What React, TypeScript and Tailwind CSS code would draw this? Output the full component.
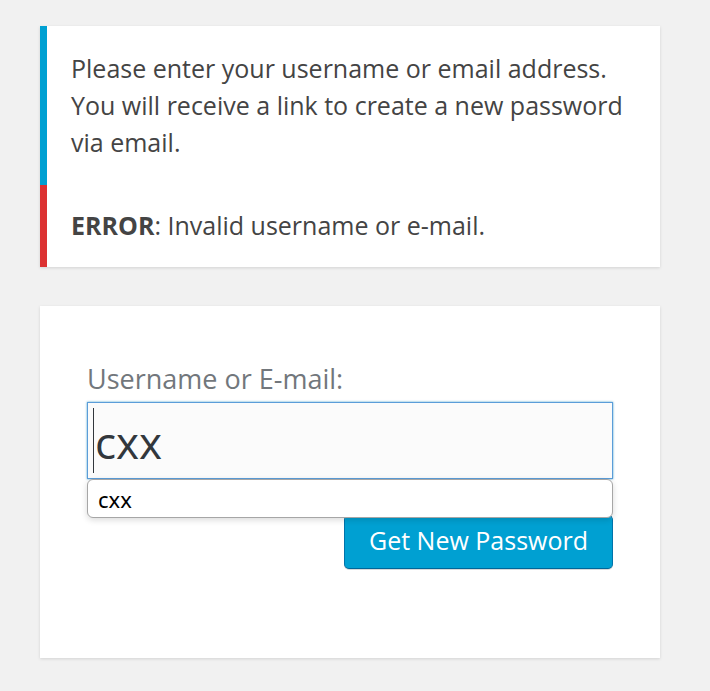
export default function App() {
  return (
    <div
      className="min-h-[691px] bg-[#f1f1f1] pt-[26px] pl-10"
      style={{ fontFamily: '"Open Sans", "Noto Sans", sans-serif' }}
    >
      <div className="w-[620px] bg-white shadow-[0_1px_3px_rgba(0,0,0,0.13)] text-[25px] leading-[37px] text-[#444]">
        <div className="border-l-[7px] border-[#00a0d2] pl-[24px] pr-[20px] py-[24px]">
          <p>
            Please enter your username or email address. You will receive a link to create a new
            password via email.
          </p>
        </div>
        <div className="border-l-[7px] border-[#dc3232] pl-[24px] pr-[20px] pt-[22px] pb-[23px]">
          <p>
            <strong className="font-bold">ERROR</strong>: Invalid username or e-mail.
          </p>
        </div>
      </div>

      <form className="mt-[39px] w-[620px] bg-white shadow-[0_1px_3px_rgba(0,0,0,0.13)] pl-[47px] pr-[47px] pt-[54px] pb-[89px]">
        <label className="block text-[27px] leading-[37px] text-[#72777c]">Username or E-mail:</label>
        <div className="relative mt-[5px]">
          <div className="flex h-[77px] items-center border border-[#5b9dd9] bg-[#fbfbfb] pl-[5px] shadow-[0_0_2px_rgba(30,140,190,0.8)]">
            <span className="mr-px h-[65px] w-px bg-[#32373c]" />
            <span className="text-[44px] leading-[60px] text-[#32373c] mt-[2px]">cxx</span>
          </div>
          <div
            className="absolute left-0 right-0 top-[77px] z-10 flex h-[39px] items-center rounded-[6px] border border-[#a6a6a6] bg-white pl-[10px] shadow-[0_2px_6px_rgba(0,0,0,0.15)]"
            style={{ fontFamily: '"Noto Sans", sans-serif' }}
          >
            <span className="text-[22px] leading-none text-black">cxx</span>
          </div>
        </div>
        <div className="mt-[36px] flex justify-end">
          <button
            type="button"
            className="h-[54px] rounded-[5px] border border-[#0073aa] border-b-[#006799] bg-[#00a0d2] px-6 pb-[4px] text-[25px] leading-[48px] text-white shadow-[inset_0_1px_0_rgba(120,200,230,0.5),0_1px_0_rgba(0,0,0,0.15)]"
          >
            Get New Password
          </button>
        </div>
      </form>
    </div>
  )
}
